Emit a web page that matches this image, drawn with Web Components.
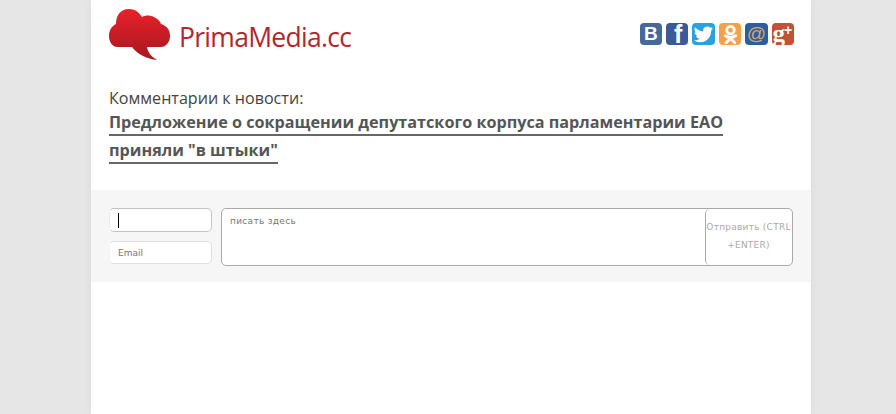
<!DOCTYPE html>
<html lang="ru">
<head>
<meta charset="utf-8">
<title>PrimaMedia.cc</title>
<style>
html, body { margin: 0; height: 100%; background: #e6e6e6; overflow: hidden; }
</style>
</head>
<body>
<pm-page>
    <pm-header></pm-header>
    <pm-title caption="Комментарии к новости:">Предложение о сокращении депутатского корпуса парламентарии ЕАО приняли "в штыки"</pm-title>
    <pm-comment-form></pm-comment-form>
</pm-page>

<script>
class PmPage extends HTMLElement {
    constructor() {
        super();
        this.attachShadow({ mode: 'open' });
    }

    connectedCallback() {
        this.shadowRoot.innerHTML = `
            <style>
                :host {
                    display: block;
                    box-sizing: border-box;
                    width: 720px;
                    height: 414px;
                    margin-left: 91px;
                    background: #fff;
                    box-shadow: 0 0 10px rgba(0, 0, 0, 0.05);
                    color: #555;
                    font-family: "Open Sans", sans-serif;
                }
            </style>
            <slot></slot>
        `;
    }
}

class PmHeader extends HTMLElement {
    constructor() {
        super();
        this.attachShadow({ mode: 'open' });
    }

    connectedCallback() {
        this.shadowRoot.innerHTML = `
            <style>
                :host {
                    display: flex;
                    justify-content: space-between;
                    align-items: flex-start;
                    height: 70px;
                    padding: 9px 17px 0 18px;
                    box-sizing: border-box;
                }
                .logo { display: flex; align-items: flex-start; }
                .logo svg { display: block; width: 62px; height: 52px; }
                .logo span {
                    margin: 12px 0 0 8px;
                    font: 26.5px/32px "Open Sans", sans-serif;
                    letter-spacing: -0.7px;
                    color: #b3262f;
                }
                .social { display: flex; gap: 4px; margin-top: 14px; }
                .ico {
                    width: 22.4px;
                    height: 22px;
                    border-radius: 4px;
                    display: flex;
                    align-items: center;
                    justify-content: center;
                    color: #fff;
                    font-family: "Liberation Sans", sans-serif;
                    font-weight: bold;
                    line-height: 22px;
                }
                .ico svg { width: 21px; height: 21px; display: block; }
                .vk { background: #46699a; font-size: 19px; }
                .fb { background: #3c5a98; font-size: 25px; padding-left: 2px; box-sizing: border-box; }
                .tw { background: #2aa3dc; }
                .ok { background: #f5a14c; }
                .ml { background: #2a5f9e; color: #d9a56e; font-size: 19px; font-weight: normal; }
                .gp { background: #c25234; justify-content: flex-start; align-items: center; padding-left: 1px; box-sizing: border-box; }
                .gp b { font: bold 25px/20px "Liberation Serif", serif; color: #fff; }
                .gp i { font: bold 14px/14px "Liberation Sans", sans-serif; margin: -9px 0 0 -1px; }
            </style>
            <div class="logo">
                <svg viewBox="0 0 62 52">
                    <defs>
                        <linearGradient id="cloud" gradientUnits="userSpaceOnUse" x1="0" y1="0" x2="0" y2="52">
                            <stop offset="0" stop-color="#e8222b"/>
                            <stop offset="1" stop-color="#a5161e"/>
                        </linearGradient>
                    </defs>
                    <path fill="url(#cloud)" d="M9 38 C3 38 0 33 0 27 C0 21 3 17 7 15 C7 7 11 0 20 0 C26 0 30 3 33 8 C36 6 41 6 45 8 C49 10 51 12 52 15 C58 17 61 21 61 27 C61 33 57 38 52 38 L38 38 C39 44 43 48 48 51 C38 50 28 45 23 38 Z"/>
                </svg>
                <span>PrimaMedia.cc</span>
            </div>
            <div class="social">
                <div class="ico vk">В</div>
                <div class="ico fb">f</div>
                <div class="ico tw">
                    <svg viewBox="0 0 24 24"><path fill="#fff" d="M23 5.1c-.8.4-1.7.6-2.6.7.9-.6 1.600-1.400 2-2.500-.9.5-1.800.9-2.900 1.100A4.500 4.500 0 0 0 11.800 8.500 12.800 12.800 0 0 1 2.500 3.800a4.500 4.500 0 0 0 1.400 6c-.7 0-1.400-.2-2-.6 0 2.200 1.500 4.100 3.600 4.500-.7.2-1.400.2-2 .1.600 1.800 2.200 3.100 4.200 3.100A9 9 0 0 1 1 18.800 12.800 12.800 0 0 0 8 20.800c8.400 0 13.100-7.100 12.800-13.400.9-.6 1.600-1.400 2.200-2.300z"/></svg>
                </div>
                <div class="ico ok">
                    <svg viewBox="0 0 24 24" fill="none" stroke="#fff" stroke-width="3.200" stroke-linecap="round">
                        <circle cx="12" cy="7" r="4.300"/>
                        <path d="M6 13.500c3.700 2.300 8.300 2.300 12 0M12 15.500v1.500M12 16.500l-5 5M12 16.500l5 5"/>
                    </svg>
                </div>
                <div class="ico ml">@</div>
                <div class="ico gp"><b>g</b><i>+</i></div>
            </div>
        `;
    }
}

class PmTitle extends HTMLElement {
    constructor() {
        super();
        this.attachShadow({ mode: 'open' });
    }

    connectedCallback() {
        this.shadowRoot.innerHTML = `
            <style>
                :host {
                    display: block;
                    height: 120px;
                    padding: 17px 70px 0 18px;
                    box-sizing: border-box;
                }
                .caption {
                    font-size: 16.1px;
                    line-height: 22px;
                    color: #444;
                }
                h1 {
                    margin: -1px 0 0;
                    font-size: 16.2px;
                    font-weight: 700;
                    line-height: 28px;
                    color: #555;
                }
                h1 span { border-bottom: 2px solid #666; padding-bottom: 1px; }
            </style>
            <div class="caption">${this.getAttribute('caption')}</div>
            <h1><span><slot></slot></span></h1>
        `;
    }
}

class PmCommentForm extends HTMLElement {
    constructor() {
        super();
        this.attachShadow({ mode: 'open' });
    }

    connectedCallback() {
        this.shadowRoot.innerHTML = `
            <style>
                :host {
                    display: flex;
                    gap: 9px;
                    height: 92px;
                    padding: 18px 18px 0 18px;
                    box-sizing: border-box;
                    background: #f6f6f6;
                    font-family: "DejaVu Sans", sans-serif;
                    font-size: 9px;
                    color: #777;
                }
                .who { display: flex; flex-direction: column; gap: 9px; width: 103px; }
                .field {
                    box-sizing: border-box;
                    height: 24px;
                    background: #fff;
                    border: 1px solid #c4c4c4;
                    border-left-color: #eee;
                    border-radius: 5px;
                    display: flex;
                    align-items: center;
                    padding-left: 8px;
                }
                .field.email { height: 23px; border-color: #e0e0e0; border-left-color: #f4f4f4; }
                .caret { width: 1px; height: 15px; background: #000; }
                .box {
                    flex: 1;
                    display: flex;
                    height: 58px;
                    background: #fff;
                    border: 1px solid #aaa;
                    border-radius: 5px;
                    box-sizing: border-box;
                }
                .text { flex: 1; padding: 6px 8px; line-height: 12px; letter-spacing: 0.3px; }
                .send {
                    box-sizing: border-box;
                    width: 87px;
                    border-left: 1px solid #aaa;
                    border-radius: 5px;
                    text-align: center;
                    white-space: nowrap;
                    color: #aaa;
                    line-height: 18px;
                    letter-spacing: 0.25px;
                    padding: 9px 1px 0 0;
                }
            </style>
            <div class="who">
                <div class="field name"><div class="caret"></div></div>
                <div class="field email">Email</div>
            </div>
            <div class="box">
                <div class="text">писать здесь</div>
                <div class="send">Отправить (CTRL<br>+ENTER)</div>
            </div>
        `;
    }
}

customElements.define('pm-page', PmPage);
customElements.define('pm-header', PmHeader);
customElements.define('pm-title', PmTitle);
customElements.define('pm-comment-form', PmCommentForm);
</script>
</body>
</html>
